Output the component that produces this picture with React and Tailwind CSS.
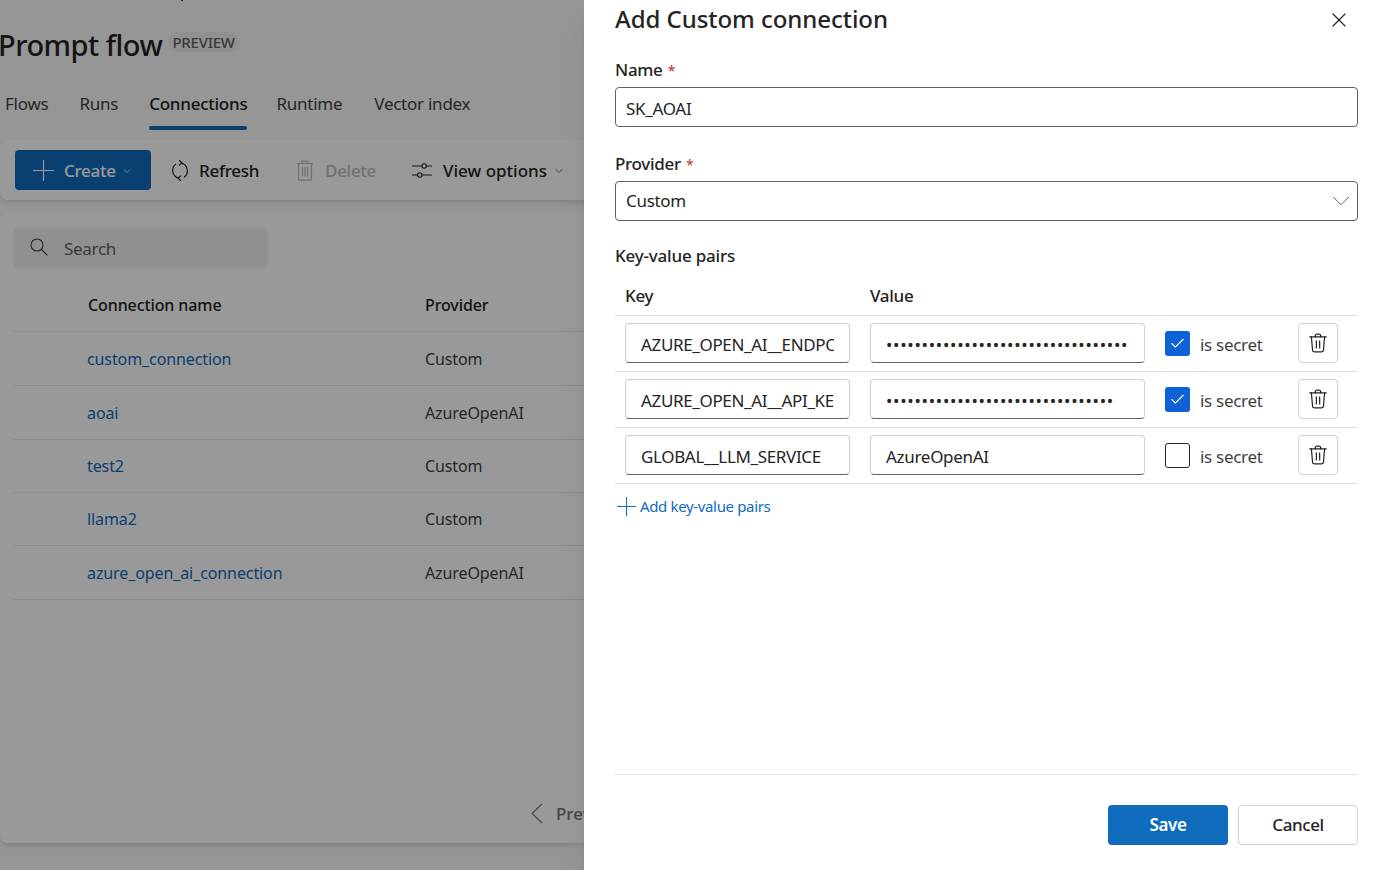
import React from 'react';
import { X, ChevronDown, Check } from 'lucide-react';

const font = { fontFamily: '"Noto Sans", sans-serif' };

const PlusIcon = ({ className }) => (
  <svg className={className} viewBox="0 0 20 20" fill="none" stroke="currentColor" strokeWidth="1.1">
    <path d="M10 0v20M0 10h20" />
  </svg>
);

const TrashIcon = ({ className }) => (
  <svg className={className} viewBox="0 0 20 20" fill="none" stroke="currentColor" strokeWidth="1.1" strokeLinecap="round" strokeLinejoin="round">
    <path d="M2.5 4.5h15" />
    <path d="M7.5 4.5V3.8A1.8 1.8 0 0 1 9.3 2h1.4a1.8 1.8 0 0 1 1.8 1.8v.7" />
    <path d="M4 4.5l1 11.6A2 2 0 0 0 7 18h6a2 2 0 0 0 2-1.9l1-11.6" />
    <path d="M8.5 8v6.5M11.5 8v6.5" />
  </svg>
);

const BinIcon = ({ className }) => (
  <svg className={className} viewBox="0 0 18 21" fill="none" stroke="currentColor" strokeWidth="1.2">
    <path d="M1 3.5h16M6 3.5V1.2h6v2.3" />
    <path d="M2.5 3.5v15.3a1.4 1.4 0 0 0 1.4 1.4h10.2a1.4 1.4 0 0 0 1.4-1.4V3.5" />
    <path d="M6.5 7v9.5M9 7v9.5M11.5 7v9.5" />
  </svg>
);

const RefreshIcon = ({ className }) => (
  <svg className={className} viewBox="0 0 20 22" fill="none" stroke="currentColor" strokeWidth="1.1" strokeLinecap="round" strokeLinejoin="round">
    <path d="M11.5 3.6a8 8 0 0 1 2.8 14" />
    <path d="M8.5 18.6a8 8 0 0 1-2.8-14" />
    <path d="M9.5 1l2.4 2.5-2.6 2.2" />
    <path d="M10.5 21l-2.4-2.5 2.6-2.2" />
  </svg>
);

const SlidersIcon = ({ className }) => (
  <svg className={className} viewBox="0 0 22 18" fill="none" stroke="currentColor" strokeWidth="1.1">
    <path d="M1 4.5h10M15.5 4.5H21M1 13.5h5.5M11 13.5h10" />
    <circle cx="13.2" cy="4.5" r="2.2" />
    <circle cx="8.8" cy="13.5" r="2.2" />
  </svg>
);

const SearchIcon = ({ className }) => (
  <svg className={className} viewBox="0 0 18 18" fill="none" stroke="currentColor" strokeWidth="1.1" strokeLinecap="round">
    <circle cx="7" cy="7" r="6" />
    <path d="M11.5 11.5l5.5 5.5" />
  </svg>
);

const connections = [
  { name: 'custom_connection', provider: 'Custom', h: 'h-[54px]' },
  { name: 'aoai', provider: 'AzureOpenAI', h: 'h-[54px]' },
  { name: 'test2', provider: 'Custom', h: 'h-[53px]' },
  { name: 'llama2', provider: 'Custom', h: 'h-[53px]' },
  { name: 'azure_open_ai_connection', provider: 'AzureOpenAI', h: 'h-[54px]' },
];

const pairs = [
  { key: 'AZURE_OPEN_AI__ENDPOINT', value: '•'.repeat(34), secret: true },
  { key: 'AZURE_OPEN_AI__API_KEY', value: '•'.repeat(32), secret: true },
  { key: 'GLOBAL__LLM_SERVICE', value: 'AzureOpenAI', secret: false },
];

const fieldClass = '-mt-px h-10 rounded border border-[#d1d1d1] border-b-[#616161] bg-white px-[15px] pt-[2px] text-[17px] text-[#242424] outline-none';

const Background = () => (
  <div className="relative h-[870px] w-[584px] shrink-0 overflow-hidden bg-[#fafafa]">
    <span className="absolute top-0 left-[181px] h-px w-[2px] bg-[#0f6cbd]" />
    <div className="flex h-[69px] items-end">
      <h1 className="mb-[2px] -ml-[2px] text-[29px] leading-[44px] font-medium tracking-[-0.5px] text-[#242424]">Prompt flow</h1>
      <span className="mb-[17px] ml-[6px] rounded-full bg-[#f0f0f0] px-1 text-[15px] leading-5 font-medium tracking-[-0.25px] text-[#616161]">PREVIEW</span>
    </div>

    <div className="flex h-[61px] gap-[31px] pl-[5px] text-[17px] tracking-[-0.25px] text-[#424242]">
      <span className="pt-[22px]">Flows</span>
      <span className="pt-[22px]">Runs</span>
      <span className="flex flex-col justify-between pt-[22px] font-medium text-[#242424]">
        <span>Connections</span>
        <span className="h-[4px] rounded-full bg-[#0f6cbd]" />
      </span>
      <span className="mr-px -ml-[2px] pt-[22px]">Runtime</span>
      <span className="pt-[22px]">Vector index</span>
    </div>

    <div className="mt-[10px] flex h-[60px] w-[620px] items-center rounded-lg bg-white pl-[15px] text-[17px] font-medium tracking-[-0.3px] shadow-md">
      <div className="flex h-10 w-[136px] items-center rounded bg-[#0f6cbd] pl-[18px] text-white">
        <PlusIcon className="h-[21px] w-[21px]" />
        <span className="mt-[2px] ml-[10px]">Create</span>
        <ChevronDown className="mt-[2px] ml-[5px] h-3 w-3" strokeWidth={1.5} />
      </div>
      <RefreshIcon className="ml-[19px] h-[23px] w-[20px] text-[#242424]" />
      <span className="mt-[2px] ml-[9px] text-[#242424]">Refresh</span>
      <BinIcon className="ml-[37px] h-[21px] w-[18px] text-[#bdbdbd]" />
      <span className="mt-[2px] ml-[11px] text-[#bdbdbd]">Delete</span>
      <SlidersIcon className="ml-[35px] h-[19px] w-[22px] text-[#242424]" />
      <span className="mt-[2px] ml-[10px] tracking-[0px] text-[#242424]">View options</span>
      <ChevronDown className="mt-[2px] ml-[6px] h-3 w-3 text-[#424242]" strokeWidth={1.5} />
    </div>

    <div className="mt-[13px] h-[630px] w-[620px] rounded-lg bg-white shadow-md">
      <div className="px-[13px] pt-[15px]">
        <div className="flex h-10 w-[255px] items-center rounded bg-[#f0f0f0] pl-[17px] text-[17px] tracking-[-0.3px] text-[#616161]">
          <SearchIcon className="-mt-[3px] h-[18px] w-[18px] text-[#424242]" />
          <span className="mt-[2px] ml-[16px]">Search</span>
        </div>
        <div className="flex h-[64px] items-center border-b border-[#e8e8e8] pt-[10px] text-[16px] font-medium tracking-[-0.1px] text-[#242424]">
          <span className="w-[412px] pl-[75px]">Connection name</span>
          <span>Provider</span>
        </div>
        {connections.map((c) => (
          <div key={c.name} className={`flex items-center border-b border-[#e8e8e8] text-[16px] tracking-[-0.1px] ${c.h}`}>
            <span className="w-[412px] pl-[74px] text-[#0f6cbd]">{c.name}</span>
            <span className="text-[#424242]">{c.provider}</span>
          </div>
        ))}
      </div>
      <div className="mt-[201px] flex items-center pl-[530px] text-[17px] font-medium text-[#757575]">
        <svg className="h-[21px] w-[13px] shrink-0" viewBox="0 0 13 21" fill="none" stroke="currentColor" strokeWidth="1.1">
          <path d="M12 1L2 10.5 12 20" />
        </svg>
        <span className="ml-[13px] whitespace-nowrap">Previous</span>
      </div>
    </div>

    {/* dim layer of the open drawer */}
    <div className="absolute inset-0 bg-black/40" />
  </div>
);

const Drawer = () => (
  <div className="relative z-10 flex h-[870px] flex-1 flex-col bg-white pr-[24px] pl-[31px] shadow-xl">
    <div className="flex h-[38px] items-center justify-between">
      <h2 className="text-[24px] font-medium tracking-[-0.05px] text-[#242424]">Add Custom connection</h2>
      <X className="mt-[2px] mr-[7px] h-[24px] w-[24px] text-[#242424]" strokeWidth={1.2} />
    </div>

    <label className="mt-[20px] block text-[17px] leading-6 font-medium tracking-[-0.3px] text-[#242424]">
      Name <span className="ml-px text-[14px] font-normal text-[#bc2f32]">*</span>
    </label>
    <input readOnly value="SK_AOAI" className="mt-[4px] h-10 w-full rounded border border-[#616161] px-[10px] pt-[2px] text-[17px] tracking-[-0.3px] text-[#242424] outline-none" />

    <label className="mt-[25px] block text-[17px] leading-6 font-medium tracking-[-0.3px] text-[#242424]">
      Provider <span className="ml-px text-[14px] font-normal text-[#bc2f32]">*</span>
    </label>
    <div className="mt-[4px] flex h-10 w-full items-center justify-between rounded border border-[#616161] pr-px pl-[10px] text-[17px] tracking-[-0.3px] text-[#242424]">
      <span>Custom</span>
      <ChevronDown className="h-[30px] w-[30px] text-[#616161]" strokeWidth={0.8} />
    </div>

    <div className="mt-[23px] text-[17px] leading-6 font-medium tracking-[-0.2px] text-[#242424]">Key-value pairs</div>

    <div className="mt-[16px] flex h-[32px] items-start border-b border-[#e0e0e0] pl-[10px] text-[17px] leading-6 font-medium tracking-[-0.3px] text-[#242424]">
      <span className="w-[245px]">Key</span>
      <span>Value</span>
    </div>
    {pairs.map((p) => (
      <div key={p.key} className="flex h-[56px] items-center border-b border-[#e0e0e0] pl-[10px]">
        <input readOnly value={p.key} className={`${fieldClass} w-[225px] tracking-[-0.35px]`} />
        <input readOnly value={p.value} className={`${fieldClass} ml-[20px] w-[275px] ${p.secret ? 'tracking-[0.73px]' : 'tracking-[-0.3px]'}`} />
        {p.secret ? (
          <span className="ml-[20px] flex h-[25px] w-[25px] items-center justify-center rounded-[3px] bg-[#0f62d6] text-white">
            <Check className="h-[17px] w-[17px]" strokeWidth={1.5} />
          </span>
        ) : (
          <span className="ml-[20px] h-[25px] w-[25px] rounded-[3px] border border-[#242424]" />
        )}
        <span className="mt-[2px] ml-[10px] w-[98px] text-[17px] tracking-[-0.3px] text-[#424242]">is secret</span>
        <button className="-mt-px flex h-10 w-10 items-center justify-center rounded border border-[#d1d1d1] text-[#242424]">
          <TrashIcon className="h-[22px] w-[22px]" />
        </button>
      </div>
    ))}

    <div className="mt-[10px] flex h-6 items-center text-[15px] tracking-[-0.35px] text-[#0f6cbd]">
      <PlusIcon className="ml-[2px] h-[19px] w-[19px]" />
      <span className="ml-[4px]">Add key-value pairs</span>
    </div>

    <div className="mt-auto border-t border-[#e0e0e0] pt-[30px] pb-[25px]">
      <div className="flex justify-end gap-[10px] text-[17px] tracking-[-0.4px]">
        <button className="h-10 w-[120px] rounded bg-[#0f6cbd] font-semibold text-white">Save</button>
        <button className="h-10 w-[120px] rounded border border-[#d1d1d1] font-medium text-[#242424]">Cancel</button>
      </div>
    </div>
  </div>
);

const App = () => (
  <div className="flex h-[870px] w-[1382px] overflow-hidden" style={font}>
    <Background />
    <Drawer />
  </div>
);

export default App;
